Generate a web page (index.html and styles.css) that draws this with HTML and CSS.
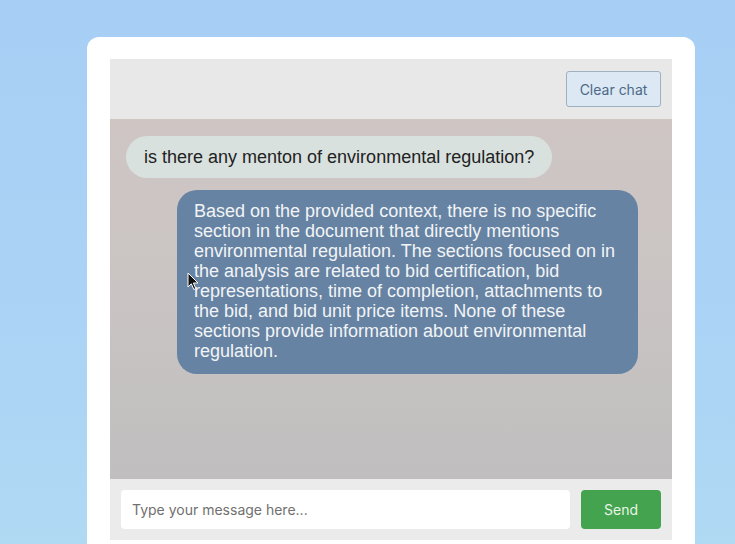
FILE: index.html
```html
<!DOCTYPE html>
<html lang="en">
<head>
<meta charset="utf-8">
<title>Chat</title>
<link rel="stylesheet" href="styles.css">
</head>
<body>
<div class="card">
  <div class="chat">
    <div class="header">
      <button class="clear-btn">Clear chat</button>
    </div>
    <div class="messages">
      <div class="msg user">is there any menton of environmental regulation?</div>
      <div class="msg bot">Based on the provided context, there is no specific section in the document that directly mentions environmental regulation. The sections focused on in the analysis are related to bid certification, bid representations, time of completion, attachments to the bid, and bid unit price items. None of these sections provide information about environmental regulation.</div>
    </div>
    <div class="footer">
      <input class="input" type="text" placeholder="Type your message here...">
      <button class="send-btn">Send</button>
    </div>
  </div>
</div>
<svg class="cursor" width="12" height="19" viewBox="0 0 12 19" aria-hidden="true">
  <path d="M1 1 L1 15 L4.3 11.8 L6.8 17.5 L8.8 16.6 L6.4 11 L11 11 Z" fill="#111" stroke="#fff" stroke-width="1" stroke-linejoin="round"/>
</svg>
</body>
</html>
```

FILE: styles.css
```css
html, body {
  margin: 0;
  padding: 0;
  height: 100%;
  overflow: hidden;
}
body {
  position: relative;
  background: linear-gradient(180deg, #a7cff5 0%, #aad3f5 60%, #b0d9f4 100%);
  font-family: "Liberation Sans", Arial, sans-serif;
}
.card {
  margin: 37px 0 0 87px;
  width: 608px;
  box-sizing: border-box;
  background: #ffffff;
  border-radius: 12px;
  padding: 22px 23px 0 23px;
  height: 520px;
}
.chat {
  width: 562px;
  display: flex;
  flex-direction: column;
}
.header {
  height: 60px;
  background: #e8e8e8;
  display: flex;
  align-items: center;
  justify-content: flex-end;
  padding-right: 11px;
}
.clear-btn {
  width: 95px;
  height: 36px;
  background: #dce8f3;
  border: 1px solid #9fb0c0;
  border-radius: 3px;
  color: #4c6a88;
  font-family: Inter, Roboto, "Liberation Sans", sans-serif;
  font-size: 14px;
  padding: 0;
}
.messages {
  height: 360px;
  box-sizing: border-box;
  background: linear-gradient(180deg, #cfc6c4 0%, #c9c4c3 50%, #c0bebf 100%);
  padding: 17px 34px 0 16px;
  display: flex;
  flex-direction: column;
  align-items: flex-start;
  gap: 12px;
}
.msg {
  font-size: 18px;
  line-height: 20px;
}
.user {
  background: #d8e1de;
  color: #222222;
  border-radius: 21px;
  padding: 11px 18px 11px 18px;
}
.bot {
  align-self: flex-end;
  width: 461px;
  box-sizing: border-box;
  background: #6683a3;
  color: #f2f4f6;
  border-radius: 20px;
  padding: 11px 17px 13px 17px;
}
.footer {
  height: 61px;
  background: #ebebeb;
  display: flex;
  align-items: center;
  padding: 0 11px;
  gap: 11px;
}
.input {
  flex: 1;
  height: 39px;
  box-sizing: border-box;
  border: none;
  border-radius: 4px;
  background: #ffffff;
  padding: 0 11px;
  font-family: Inter, Roboto, "Liberation Sans", sans-serif;
  font-size: 14px;
  color: #333;
  outline: none;
}
.input::placeholder {
  color: #707070;
}
.send-btn {
  width: 80px;
  height: 39px;
  border: none;
  border-radius: 4px;
  background: #43a34e;
  color: #e8f5e8;
  font-family: Inter, Roboto, "Liberation Sans", sans-serif;
  font-size: 14px;
  padding: 0;
}
.cursor {
  position: absolute;
  left: 187px;
  top: 272px;
}
```
